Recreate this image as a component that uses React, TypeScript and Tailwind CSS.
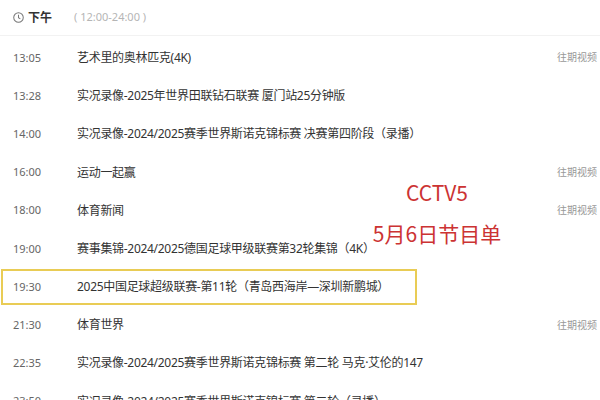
import React from "react";

const rows: { t: string; title: string; past?: boolean; hl?: boolean }[] = [
  { t: "13:05", title: "艺术里的奥林匹克(4K)", past: true },
  { t: "13:28", title: "实况录像-2025年世界田联钻石联赛 厦门站25分钟版" },
  { t: "14:00", title: "实况录像-2024/2025赛季世界斯诺克锦标赛 决赛第四阶段（录播）" },
  { t: "16:00", title: "运动一起赢", past: true },
  { t: "18:00", title: "体育新闻", past: true },
  { t: "19:00", title: "赛事集锦-2024/2025德国足球甲级联赛第32轮集锦（4K）" },
  { t: "19:30", title: "2025中国足球超级联赛-第11轮（青岛西海岸—深圳新鹏城）", hl: true },
  { t: "21:30", title: "体育世界", past: true },
  { t: "22:35", title: "实况录像-2024/2025赛季世界斯诺克锦标赛 第二轮 马克·艾伦的147" },
  { t: "23:50", title: "实况录像-2024/2025赛季世界斯诺克锦标赛 第二轮（录播）" },
];

const font = { fontFamily: '"Noto Sans", "Noto Sans CJK SC", sans-serif' };

export default function App() {
  return (
    <div className="relative w-[600px] h-[400px] overflow-hidden bg-white" style={font}>
      <div className="flex items-center h-[36px] pl-[13px] border-b border-[#f2f2f2]">
        <svg width="11" height="11" viewBox="0 0 12 12" className="mr-[4px]">
          <circle cx="6" cy="6" r="5.2" fill="none" stroke="#777" strokeWidth="1.1" />
          <path d="M6 3v3.2l2 1.3" fill="none" stroke="#777" strokeWidth="1.1" />
        </svg>
        <span className="text-[12px] font-bold text-[#333]">下午</span>
        <span className="ml-[22px] text-[11px] text-[#b5b5b5]">( 12:00-24:00 )</span>
      </div>
      <div className="pt-[2.9px]">
        {rows.map((r) => (
          <div key={r.t} className="relative flex items-center h-[38.2px]">
            <span className="w-[77px] shrink-0 pl-[13px] text-[11px] text-[#666]">{r.t}</span>
            <span className="flex-1 text-[12px] tracking-[-0.3px] text-[#333] whitespace-nowrap">{r.title}</span>
            {r.past && <span className="pr-[3px] text-[10px] text-[#999]">往期视频</span>}
            {r.hl && (
              <div className="absolute left-[1px] top-[1px] w-[416px] h-[36px] border-2 border-[#e9cc55]" />
            )}
          </div>
        ))}
      </div>
      <div
        className="absolute left-[362px] top-[177px] w-[150px] flex flex-col items-center text-[#cc3333] text-[21px] leading-[30px] whitespace-nowrap"
        style={{ fontFamily: '"Noto Sans CJK SC", sans-serif' }}
      >
        <span>CCTV5</span>
        <span className="mt-[11px]">5月6日节目单</span>
      </div>
    </div>
  );
}
